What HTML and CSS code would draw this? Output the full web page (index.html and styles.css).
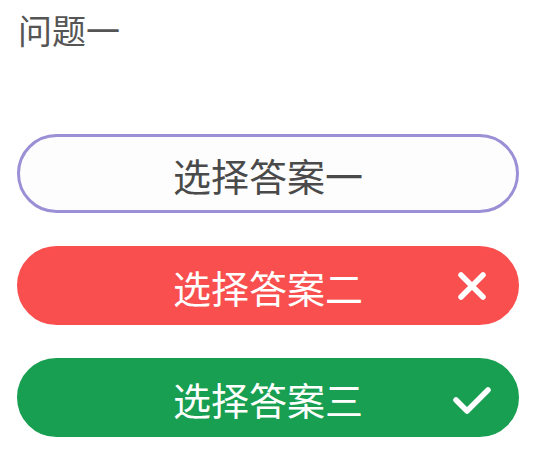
FILE: index.html
```html
<!DOCTYPE html>
<html lang="zh-CN">
<head>
  <meta charset="UTF-8" />
  <meta name="viewport" content="width=device-width, initial-scale=1.0" />
  <title>问题一</title>
  <link rel="stylesheet" href="styles.css">
</head>
<body>
  <div class="quiz">
    <div class="question">问题一</div>
    <div class="answers">
      <div class="answer">
        <span class="answer-text">选择答案一</span>
      </div>
      <div class="answer wrong">
        <span class="answer-text">选择答案二</span>
        <svg class="answer-icon" width="32" height="32" viewBox="0 0 32 32">
          <path d="M5 5 L27 27 M27 5 L5 27" stroke="#fff" stroke-width="5.5" stroke-linecap="round" fill="none"/>
        </svg>
      </div>
      <div class="answer right">
        <span class="answer-text">选择答案三</span>
        <svg class="answer-icon" width="40" height="32" viewBox="0 0 40 32">
          <path d="M4 18 L15 29 L36 8" stroke="#fff" stroke-width="5.5" stroke-linecap="round" stroke-linejoin="round" fill="none"/>
        </svg>
      </div>
    </div>
  </div>
</body>
</html>
```

FILE: styles.css
```css
html, body {
  margin: 0;
  padding: 0;
  background: #ffffff;
  font-family: 'Noto Sans CJK SC', 'Noto Sans', sans-serif;
}
.quiz {
  padding: 6px 20px 0 17px;
}
.question {
  font-size: 34px;
  line-height: 48px;
  color: #555555;
  padding-left: 1px;
}
.answers {
  display: flex;
  flex-direction: column;
  gap: 33px;
  margin-top: 80px;
}
.answer {
  box-sizing: border-box;
  height: 79px;
  border: 3px solid #9b8fd6;
  border-radius: 40px;
  background: #fdfdfd;
  display: grid;
  grid-template-columns: 1fr auto 1fr;
  align-items: center;
  color: #4a4a4a;
  font-size: 38px;
}
.answer-text {
  grid-column: 2;
  line-height: 1;
  padding-top: 2px;
}
.answer-icon {
  grid-column: 3;
  justify-self: end;
  margin-right: 28px;
}
.wrong {
  background: #fa4f4f;
  border-color: #fa4f4f;
  color: #ffffff;
}
.right {
  background: #189f51;
  border-color: #189f51;
  color: #ffffff;
}
.right .answer-icon {
  margin-right: 24px;
}
```
